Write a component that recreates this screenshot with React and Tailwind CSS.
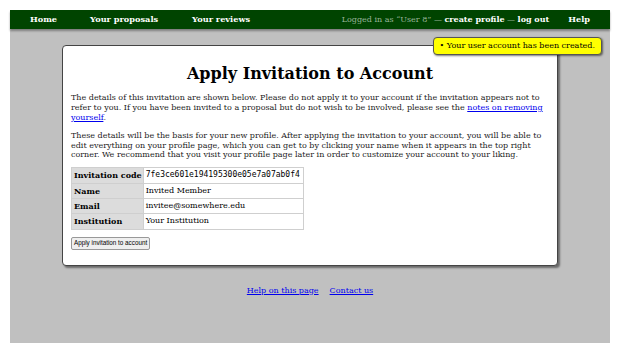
export default function App() {
  const serif = { fontFamily: '"DejaVu Serif", serif' };
  return (
    <div className="bg-white p-[10px] w-[620px] h-[353px]" style={serif}>
      <div className="relative bg-[#c0c0c0] h-[333px] flex flex-col">
        <nav className="h-[19px] bg-[#004400] flex items-center text-[8.2px] font-bold text-white shadow-[0_2px_2px_rgba(0,0,0,0.35)] relative z-10">
          <span className="ml-[20px]">Home</span>
          <span className="ml-[33px]">Your proposals</span>
          <span className="ml-[34px]">Your reviews</span>
          <span className="ml-auto font-normal text-[8px] text-[#9ab59a]">
            Logged in as “User 8” — <span className="font-bold text-white">create profile</span> — <span className="font-bold text-white">log out</span>
          </span>
          <span className="ml-[19px] mr-[20px]">Help</span>
        </nav>
        <div className="absolute right-[8px] top-[27px] z-20 bg-[#ffff00] border border-[#555] rounded-[4px] shadow-[1px_1px_2px_rgba(0,0,0,0.5)] px-[6px] h-[18px] flex items-center text-[8px] text-black">
          • Your user account has been created.
        </div>
        <div className="mx-[52px] mt-[16px] bg-white border border-[#444] rounded-[4px] shadow-[2px_2px_2px_rgba(0,0,0,0.45)] px-[8px] pt-[18px] pb-[15px] text-[8px] leading-[10px] text-[#222]">
          <h1 className="text-[16px] leading-[20px] font-bold text-center text-black">Apply Invitation to Account</h1>
          <p className="mt-[9px]">
            The details of this invitation are shown below. Please do not apply it to your account if the invitation appears not to refer to you. If you have been invited to a proposal but do not wish to be involved, please see the <a href="#" className="text-[#0000ee] underline">notes on removing yourself</a>.
          </p>
          <p className="mt-[8px] leading-[9.7px]">
            These details will be the basis for your new profile. After applying the invitation to your account, you will be able to edit everything on your profile page, which you can get to by clicking your name when it appears in the top right corner. We recommend that you visit your profile page later in order to customize your account to your liking.
          </p>
          <table className="mt-[7px] border-collapse">
            <tbody>
              {[
                ['Invitation code', '7fe3ce601e194195300e05e7a07ab0f4', true],
                ['Name', 'Invited Member'],
                ['Email', 'invitee@somewhere.edu'],
                ['Institution', 'Your Institution'],
              ].map(([k, v, mono]) => (
                <tr key={k} className="h-[15.4px]">
                  <th className="bg-[#dcdcdc] border border-[#cfcfcf] text-left font-bold pl-[2px] pr-[1px] text-black">{k}</th>
                  <td className="border border-[#cfcfcf] pl-[2px] pr-[3px] text-black" style={mono ? { fontFamily: '"DejaVu Sans Mono", monospace' } : undefined}>{v}</td>
                </tr>
              ))}
            </tbody>
          </table>
          <button className="mt-[7px] h-[13px] px-[2px] text-[6.3px] leading-none bg-[#efefef] border border-[#999] rounded-[2px] text-black" style={{ fontFamily: '"Liberation Sans", sans-serif' }}>
            Apply invitation to account
          </button>
        </div>
        <div className="mt-[19px] flex justify-center gap-[11px] text-[8px] text-[#0000ee]">
          <a href="#" className="underline">Help on this page</a>
          <a href="#" className="underline">Contact us</a>
        </div>
      </div>
    </div>
  );
}
